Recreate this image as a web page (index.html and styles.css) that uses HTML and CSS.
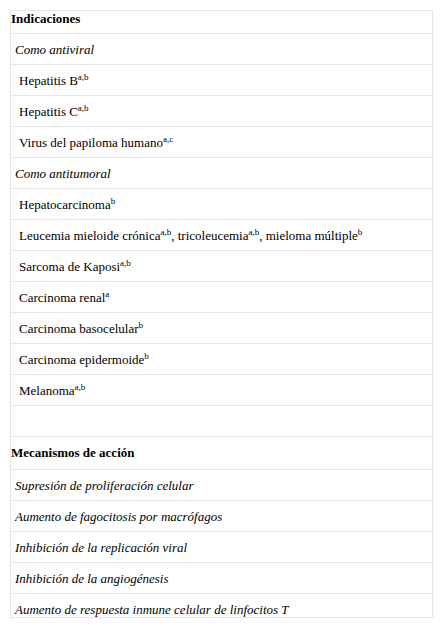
FILE: index.html
```html
<!DOCTYPE html>
<html>
<head>
<meta charset="utf-8">
<link rel="stylesheet" href="styles.css">
</head>
<body>
<div class="tbl">
  <div class="row hd first">Indicaciones</div>
  <div class="row sub">Como antiviral</div>
  <div class="row item">Hepatitis B<sup>a,b</sup></div>
  <div class="row item">Hepatitis C<sup>a,b</sup></div>
  <div class="row item">Virus del papiloma humano<sup>a,c</sup></div>
  <div class="row sub">Como antitumoral</div>
  <div class="row item">Hepatocarcinoma<sup>b</sup></div>
  <div class="row item">Leucemia mieloide crónica<sup>a,b</sup>, tricoleucemia<sup>a,b</sup>, mieloma múltiple<sup>b</sup></div>
  <div class="row item">Sarcoma de Kaposi<sup>a,b</sup></div>
  <div class="row item">Carcinoma renal<sup>a</sup></div>
  <div class="row item">Carcinoma basocelular<sup>b</sup></div>
  <div class="row item">Carcinoma epidermoide<sup>b</sup></div>
  <div class="row item">Melanoma<sup>a,b</sup></div>
  <div class="row empty"></div>
  <div class="row hd second">Mecanismos de acción</div>
  <div class="row sub">Supresión de proliferación celular</div>
  <div class="row sub">Aumento de fagocitosis por macrófagos</div>
  <div class="row sub">Inhibición de la replicación viral</div>
  <div class="row sub">Inhibición de la angiogénesis</div>
  <div class="row sub last">Aumento de respuesta inmune celular de linfocitos T</div>
</div>
</body>
</html>
```

FILE: styles.css
```css
body {
  padding: 2px 0 0 2px;
  font-family: "Liberation Serif", "Times New Roman", Times, "Nimbus Roman", "Nimbus Roman No9 L", "DejaVu Serif", "Noto Serif", serif;
  font-size: 16px;
}
.tbl {
  font: 13px/15px "Liberation Serif", "Times New Roman", Times, "Nimbus Roman", "Nimbus Roman No9 L", "DejaVu Serif", "Noto Serif", serif;
  width: 423px;
  box-sizing: border-box;
  border: 1px solid #e6e6e6;
  border-bottom: 0;
  display: flex;
  flex-direction: column;
}
.row {
  box-sizing: border-box;
  height: 31px;
  padding: 8px 4px 0 8px;
  border-bottom: 1px solid #e6e6e6;
}
.hd {
  font-weight: bold;
  padding-left: 0;
}
.first {
  height: 23px;
  padding-top: 0;
}
.second {
  height: 33px;
  padding-top: 8px;
}
.sub {
  font-style: italic;
  padding-left: 4px;
}
.last {
  height: 24px;
  padding-top: 8px;
}
sup {
  font-size: 9px;
  line-height: 0;
  vertical-align: 5px;
}
```
